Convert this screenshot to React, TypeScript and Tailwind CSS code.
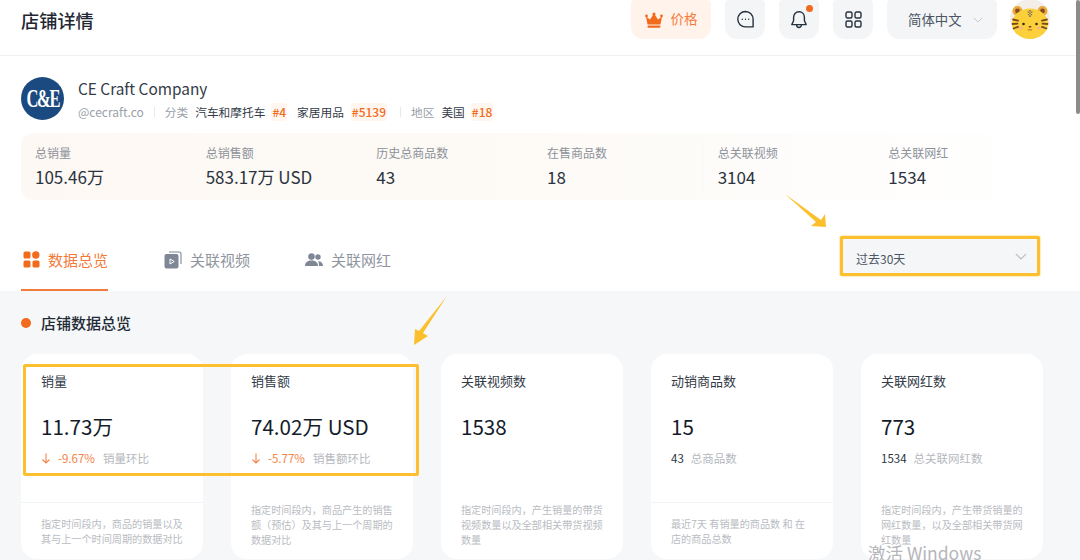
import React from "react";

const FONT = { fontFamily: '"Noto Sans CJK SC", "Noto Sans", sans-serif' };

function Tiger({ size = 40 }: { size?: number }) {
  return (
    <svg width={size} height={size} viewBox="0 0 40 40">
      <defs>
        <clipPath id="avatar-clip">
          <circle cx="20" cy="20" r="20" />
        </clipPath>
      </defs>
      <g clipPath="url(#avatar-clip)">
        <rect width="40" height="40" fill="#f3efe8" />
        <circle cx="7.500" cy="12" r="5" fill="#e9a93c" />
        <circle cx="32.500" cy="12" r="5" fill="#e9a93c" />
        <circle cx="7.500" cy="12" r="2.400" fill="#8a4b1e" />
        <circle cx="32.500" cy="12" r="2.400" fill="#8a4b1e" />
        <ellipse cx="20" cy="25" rx="18" ry="15.500" fill="#fbd03a" />
        <path d="M17 12.500h6l-1 1.200h-4ZM17.500 15h5l-1 1.200h-3ZM19.300 11v7h1.400v-7Z" fill="#7d6a5a" />
        <path d="M3 20.500l5 1.200M2.500 25l5-.4M3.500 29.500l4.500-1.600M37 20.500l-5 1.200M37.500 25l-5-.4M36.500 29.500l-4.500-1.600" stroke="#7a4a1c" strokeWidth="1.800" strokeLinecap="round" />
        <circle cx="13.500" cy="25" r="1.300" fill="#3b2a16" />
        <circle cx="26.500" cy="25" r="1.300" fill="#3b2a16" />
        <ellipse cx="11" cy="29" rx="2.200" ry="1.600" fill="#f6b58a" />
        <ellipse cx="29" cy="29" rx="2.200" ry="1.600" fill="#f6b58a" />
        <path d="M18.300 27h3.400L20 29.200Z" fill="#8a3a1c" />
        <path d="M17.800 30.500c1 .9 1.600.9 2.200 0 .6.900 1.200.9 2.200 0" stroke="#8a3a1c" strokeWidth=".7" fill="none" />
      </g>
    </svg>
  );
}

function IconBox({ children, className = "" }: { children: React.ReactNode; className?: string }) {
  return (
    <div className={`ml-[14px] flex h-[39px] w-[40px] items-center justify-center rounded-b-[12px] rounded-t-[4px] bg-[#f3f5f7] ${className}`}>
      {children}
    </div>
  );
}

function Head() {
  return (
    <div className="flex h-[56px] shrink-0 items-start justify-between border-b border-[#f1f2f4] pl-[21px] pr-[30px]">
      <h1 className="pt-[6px] text-[18.200px] font-medium leading-[28px] text-[#1f2733]">店铺详情</h1>
      <div className="flex items-start">
        <div className="flex h-[39px] w-[80px] items-center justify-center gap-[8px] rounded-b-[12px] rounded-t-[4px] bg-[#fff3ec]">
          <svg width="18" height="16" viewBox="0 0 18 16" fill="#f26a1b">
            <path d="M1 4.500 5 7.500 9 1.500 13 7.500 17 4.500 15.500 12.500H2.500Z" />
            <circle cx="1.500" cy="4" r="1.400" />
            <circle cx="16.500" cy="4" r="1.400" />
            <circle cx="9" cy="2" r="1.600" />
            <rect x="2.500" y="13.500" width="13" height="2.200" rx="1" />
          </svg>
          <span className="pb-[1px] text-[13.500px] leading-none text-[#f47b3a]">价格</span>
        </div>
        <IconBox>
          <svg width="19" height="19" viewBox="0 0 19 19" fill="none" stroke="#27303f" strokeWidth="1.400">
            <path d="M9.500 1.500a7.700 7.700 0 1 0 0 15.400h7.600V9.200A7.700 7.700 0 0 0 9.500 1.500Z" strokeLinejoin="round" />
            <circle cx="6.300" cy="9.300" r=".7" fill="#27303f" stroke="none" />
            <circle cx="9.500" cy="9.300" r=".7" fill="#27303f" stroke="none" />
            <circle cx="12.700" cy="9.300" r=".7" fill="#27303f" stroke="none" />
          </svg>
        </IconBox>
        <IconBox className="relative">
          <svg width="18" height="20" viewBox="0 0 18 20" fill="none" stroke="#27303f" strokeWidth="1.400">
            <path d="M9 1.800c-3.400 0-5.400 2.600-5.400 5.800v3.200L1.800 14.600h14.400l-1.800-3.800V7.600c0-3.200-2-5.800-5.400-5.800Z" strokeLinejoin="round" />
            <path d="M6.600 14.800c0 3.600 4.800 3.600 4.800 0" />
          </svg>
          <span className="absolute right-[6px] top-[5px] h-[7px] w-[7px] rounded-full bg-[#f26a1b]" />
        </IconBox>
        <IconBox>
          <svg width="17" height="17" viewBox="0 0 17 17" fill="none" stroke="#27303f" strokeWidth="1.400">
            <rect x="1" y="1" width="6" height="6" rx="1.500" />
            <rect x="10" y="1" width="6" height="6" rx="1.500" />
            <rect x="1" y="10" width="6" height="6" rx="1.500" />
            <rect x="10" y="10" width="6" height="6" rx="1.500" />
          </svg>
        </IconBox>
        <div className="ml-[14px] flex h-[39px] w-[110px] items-center rounded-b-[12px] rounded-t-[4px] bg-[#f3f5f7] pl-[21px]">
          <span className="text-[13.400px] leading-none text-[#4b5563]">简体中文</span>
          <svg className="ml-[11px]" width="10" height="6" viewBox="0 0 10 6" fill="none" stroke="#c6cad0" strokeWidth="1">
            <path d="M.7.7 5 5 9.300.7" />
          </svg>
        </div>
        <div className="ml-[13px] mt-[-1px]">
          <Tiger />
        </div>
      </div>
    </div>
  );
}

function Logo() {
  return (
    <div className="flex h-[43px] w-[43px] shrink-0 items-center justify-center overflow-hidden rounded-full bg-[#1b4a80]">
      <span className="scale-x-[0.66] whitespace-nowrap text-[25px] font-bold leading-none tracking-[-2px] text-white" style={{ fontFamily: '"Liberation Serif", serif' }}>
        C&amp;E
      </span>
    </div>
  );
}

function Rank({ children, className = "ml-[6px]" }: { children: React.ReactNode; className?: string }) {
  return <span className={`${className} rounded-[3px] bg-[#fff6ef] px-[1px] text-[12px] font-medium text-[#f26a1b]`}>{children}</span>;
}

function Shop() {
  return (
    <div className="flex items-start pl-[21px] pt-[21px]">
      <Logo />
      <div className="ml-[14px]">
        <div className="text-[15.400px] leading-[22px] text-[#333b47]">CE Craft Company</div>
        <div className="mt-[4px] flex items-center text-[11.700px] leading-[18px]">
          <span className="text-[12px] text-[#9aa0a9]">@cecraft.co</span>
          <span className="ml-[10px] h-[10px] w-px bg-[#e8e9ec]" />
          <span className="ml-[10px] text-[#9aa0a9]">分类</span>
          <span className="ml-[7px] text-[#333b47]">汽车和摩托车</span>
          <Rank>#4</Rank>
          <span className="ml-[10px] text-[#333b47]">家居用品</span>
          <Rank className="ml-[7px]">#5139</Rank>
          <span className="ml-[13px] h-[10px] w-px bg-[#e8e9ec]" />
          <span className="ml-[10px] text-[#9aa0a9]">地区</span>
          <span className="ml-[7px] text-[#333b47]">美国</span>
          <Rank>#18</Rank>
        </div>
      </div>
    </div>
  );
}

const totals = [
  ["总销量", "105.46万"],
  ["总销售额", "583.17万 USD"],
  ["历史总商品数", "43"],
  ["在售商品数", "18"],
  ["总关联视频", "3104"],
  ["总关联网红", "1534"],
];

function Totals() {
  return (
    <div className="ml-[21px] mr-[21px] mt-[12px] grid h-[67px] shrink-0 grid-cols-6 rounded-[12px] bg-[linear-gradient(90deg,#fdf8f3_0%,#fdfaf6_45%,#ffffff_100%)] pl-[14px]">
      {totals.map(([label, value], i) => (
        <div key={label} className="relative pt-[11px]">
          <div className="text-[12px] leading-[18px] text-[#8d929b]">{label}</div>
          <div className="mt-[3px] text-[17px] leading-[24px] text-[#2b3340]">{value}</div>
          {i > 0 && i < 5 && <span className="absolute left-[-15px] top-[8px] h-[50px] w-px bg-[#fbf8f5]" />}
        </div>
      ))}
    </div>
  );
}

function GridIcon() {
  return (
    <svg width="17" height="17" viewBox="0 0 17 17" fill="#f26a1b">
      <rect x="0.500" y="0.500" width="7" height="7" rx="1.600" />
      <circle cx="12.800" cy="4" r="3.700" />
      <rect x="0.500" y="9.500" width="7" height="7" rx="1.600" />
      <rect x="9.500" y="9.500" width="7" height="7" rx="1.600" />
    </svg>
  );
}

function VideoIcon() {
  return (
    <svg width="18" height="18" viewBox="0 0 18 18" fill="none">
      <path d="M5 1h10a2 2 0 0 1 2 2v10" stroke="#7f8796" strokeWidth="1.100" />
      <rect x="0.500" y="3" width="14" height="14.500" rx="2" fill="#7f8796" />
      <path d="M6 8v5l4.200-2.500Z" fill="none" stroke="#fff" strokeWidth="1" strokeLinejoin="round" />
    </svg>
  );
}

function PeopleIcon() {
  return (
    <svg width="18" height="14" viewBox="0 0 18 14" fill="#7f8796">
      <circle cx="6.500" cy="3.600" r="3.300" />
      <path d="M0 13c0-3.600 2.600-5.500 6.500-5.500S13 9.400 13 13Z" />
      <circle cx="13" cy="4" r="2.700" />
      <path d="M14 13h4c0-3-1.800-4.800-5-4.800 .9 1.200 1 3 1 4.800Z" />
    </svg>
  );
}

function Tabs() {
  return (
    <div className="relative mt-[21px] flex h-[70px] shrink-0 items-start pl-[21px]">
      <div className="flex h-[70px] w-[87px] items-start gap-[8px] border-b-[2px] border-[#f27b3c] pl-[2px] pt-[27px]">
        <span className="mt-[3px]"><GridIcon /></span>
        <span className="whitespace-nowrap text-[15px] leading-[24px] text-[#f27b3c]">数据总览</span>
      </div>
      <div className="ml-[56px] flex items-start gap-[8px] pt-[27px]">
        <span className="mt-[3px]"><VideoIcon /></span>
        <span className="text-[15px] leading-[24px] text-[#8f95a0]">关联视频</span>
      </div>
      <div className="ml-[55px] flex items-start gap-[8px] pt-[27px]">
        <span className="mt-[5px]"><PeopleIcon /></span>
        <span className="text-[15px] leading-[24px] text-[#8f95a0]">关联网红</span>
      </div>
      <div className="ml-auto mr-[40px] mt-[15px] flex h-[40px] w-[200px] items-center justify-between rounded-[2px] border-[3px] border-[#fcc02e] bg-[#f5f6f8] pl-[13px] pr-[10px] shadow-[0_0_2px_#fcc02e]">
        <span className="pt-[6px] text-[12px] leading-none text-[#4b5563]">过去30天</span>
        <svg width="12" height="7" viewBox="0 0 12 7" fill="none" stroke="#b8bcc3" strokeWidth="1.100">
          <path d="M.8.8 6 6l5.200-5.200" />
        </svg>
      </div>
    </div>
  );
}

type CardData = {
  title: string;
  value: string;
  pct?: string;
  pctLabel?: string;
  count?: string;
  countLabel?: string;
  note: string;
  divider?: boolean;
};

const cards: CardData[] = [
  { title: "销量", value: "11.73万", pct: "-9.67%", pctLabel: "销量环比", note: "指定时间段内，商品的销量以及其与上一个时间周期的数据对比", divider: true },
  { title: "销售额", value: "74.02万 USD", pct: "-5.77%", pctLabel: "销售额环比", note: "指定时间段内，商品产生的销售额（预估）及其与上一个周期的数据对比" },
  { title: "关联视频数", value: "1538", note: "指定时间段内，产生销量的带货视频数量以及全部相关带货视频数量" },
  { title: "动销商品数", value: "15", count: "43", countLabel: "总商品数", note: "最近7天 有销量的商品数 和 在店的商品总数", divider: true },
  { title: "关联网红数", value: "773", count: "1534", countLabel: "总关联网红数", note: "指定时间段内，产生带货销量的网红数量，以及全部相关带货网红数量" },
];

function Card({ c }: { c: CardData }) {
  return (
    <div className="h-[205px] w-[182px] shrink-0 overflow-hidden rounded-[16px] bg-white">
      <div className="h-[148px] px-[20px] pt-[17px]">
        <div className="text-[13px] leading-[20px] text-[#333b47]">{c.title}</div>
        <div className="mt-[20px] whitespace-nowrap text-[20.600px] leading-[30px] text-[#141c2a]">{c.value}</div>
        {c.pct && (
          <div className="mt-[8px] flex items-center text-[11.500px] leading-[18px]">
            <svg width="10" height="11" viewBox="0 0 10 11" fill="none" stroke="#f4834a" strokeWidth="1.100">
              <path d="M5 .5v9.500M1.500 6.500 5 10l3.500-3.500" />
            </svg>
            <span className="ml-[7px] text-[#f4834a]">{c.pct}</span>
            <span className="ml-[8px] text-[#b5b8be]">{c.pctLabel}</span>
          </div>
        )}
        {c.count && (
          <div className="mt-[8px] flex items-center text-[11.500px] leading-[18px]">
            <span className="text-[#2b3340]">{c.count}</span>
            <span className="ml-[7px] text-[#b5b8be]">{c.countLabel}</span>
          </div>
        )}
      </div>
      {c.divider ? (
        <div className="h-[57px] border-t border-[#f3f4f6] pl-[20px] pr-[18px] pt-[13px] text-[10.150px] leading-[15px] text-[#b9bcc2]">
          {c.note}
        </div>
      ) : (
        <div className="h-[57px] pl-[20px] pr-[18px] text-[10.150px] leading-[15px] text-[#b9bcc2]">{c.note}</div>
      )}
    </div>
  );
}

function Overview() {
  return (
    <div className="relative flex-1 bg-[#f5f7f9] pl-[21px] pt-[20px]">
      <div className="flex items-center gap-[10px]">
        <span className="h-[10px] w-[10px] rounded-full bg-[#f26a1b]" />
        <span className="text-[15px] font-medium leading-[24px] text-[#222a36]">店铺数据总览</span>
      </div>
      <div className="mt-[19px] flex gap-[28px]">
        {cards.map((c) => (
          <Card key={c.title} c={c} />
        ))}
      </div>
    </div>
  );
}

export default function App() {
  return (
    <div className="relative h-[560px] w-[1080px] overflow-hidden bg-white" style={FONT}>
      <div className="flex h-full flex-col">
        <Head />
        <Shop />
        <Totals />
        <Tabs />
        <Overview />
      </div>

      {/* annotations overlaid on the screenshot */}
      <div className="absolute left-[23px] top-[364px] h-[112px] w-[396px] rounded-[2px] border-[3px] border-[#fcc02e]" />
      <svg className="pointer-events-none absolute left-0 top-0" width="1080" height="560">
        <path d="M785 194 821 220 825 214 826 227 811 226 816 222Z" fill="#fcc02e" />
        <path d="M447 296 423 333 428 336 414 345 415 329 419 331Z" fill="#fcc02e" />
      </svg>
      <div className="pointer-events-none absolute left-[868px] top-[541px] text-[17.500px] leading-[24px] text-[#b4b6ba]">激活 Windows</div>
      <div className="absolute right-0 top-0 h-[114px] w-[4px] rounded-[2px] bg-[#8b8b8b]" />
    </div>
  );
}
